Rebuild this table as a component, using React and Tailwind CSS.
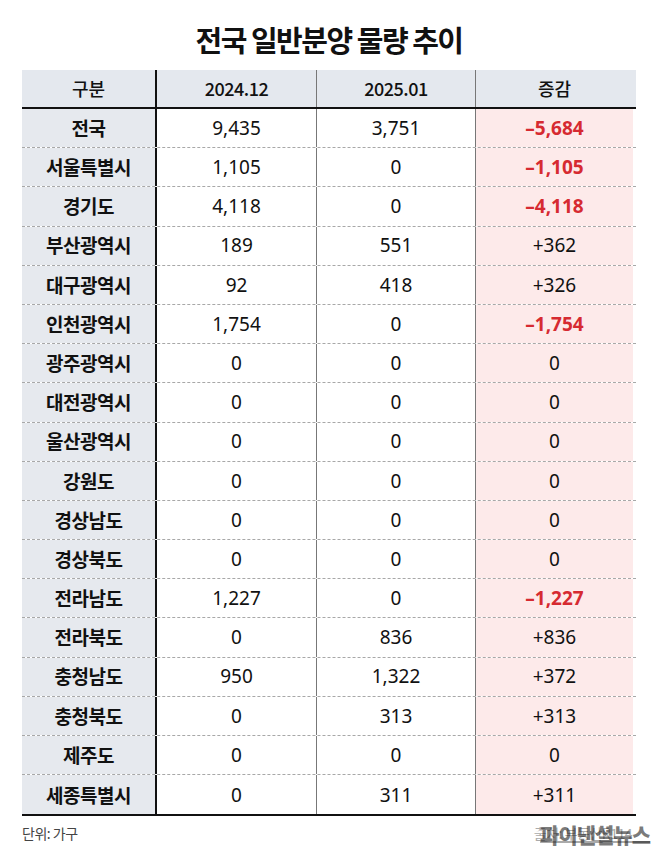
import React from "react";

const rows = [
  ["전국", "9,435", "3,751", "–5,684", true],
  ["서울특별시", "1,105", "0", "–1,105", true],
  ["경기도", "4,118", "0", "–4,118", true],
  ["부산광역시", "189", "551", "+362", false],
  ["대구광역시", "92", "418", "+326", false],
  ["인천광역시", "1,754", "0", "–1,754", true],
  ["광주광역시", "0", "0", "0", false],
  ["대전광역시", "0", "0", "0", false],
  ["울산광역시", "0", "0", "0", false],
  ["강원도", "0", "0", "0", false],
  ["경상남도", "0", "0", "0", false],
  ["경상북도", "0", "0", "0", false],
  ["전라남도", "1,227", "0", "–1,227", true],
  ["전라북도", "0", "836", "+836", false],
  ["충청남도", "950", "1,322", "+372", false],
  ["충청북도", "0", "313", "+313", false],
  ["제주도", "0", "0", "0", false],
  ["세종특별시", "0", "311", "+311", false],
];

const cols = "grid grid-cols-[135px_160px_159px_157px]";

export default function App() {
  return (
    <div className="w-[658px] h-[852px] bg-white font-['Noto_Sans_CJK_KR',sans-serif] text-[#111]">
      <div className="h-[70px] flex items-center justify-center pt-[8px]">
        <h1 className="text-[29px] font-bold tracking-[-1.5px] leading-none">
          전국 일반분양 물량 추이
        </h1>
      </div>

      <div className="px-[22px]">
        {/* header */}
        <div className={`${cols} h-[39px] bg-[#e4e8ee] border-b-2 border-[#111] text-[18px] font-medium`}>
          <div className="flex items-center justify-center border-r-2 border-[#111]">구분</div>
          <div className="flex items-center justify-center border-r border-[#777] tracking-[-0.5px]">2024.12</div>
          <div className="flex items-center justify-center border-r border-[#777] tracking-[-0.5px]">2025.01</div>
          <div className="flex items-center justify-center">증감</div>
        </div>

        {/* body */}
        <div className="border-b-2 border-[#111]">
          {rows.map(([name, a, b, diff, neg], i) => (
            <div
              key={name}
              className={`${cols} h-[39.2px] text-[19px] ${
                i < rows.length - 1 ? "border-b border-dashed border-[#a8a8a8]" : ""
              }`}
            >
              <div className="flex items-center justify-center bg-[#e6e9ee] border-r-2 border-[#111] font-bold tracking-[-0.5px]">
                {name}
              </div>
              <div className="flex items-center justify-center border-r border-[#777] font-['Noto_Sans',sans-serif]">
                {a}
              </div>
              <div className="flex items-center justify-center border-r border-[#777] font-['Noto_Sans',sans-serif]">
                {b}
              </div>
              <div
                className={`flex items-center justify-center bg-[#fdeaea] font-['Noto_Sans',sans-serif] ${
                  neg ? "font-bold text-[#d62a31]" : ""
                }`}
              >
                {diff}
              </div>
            </div>
          ))}
        </div>

        {/* footer */}
        <div className="relative flex items-center justify-between h-[34px] text-[14px] text-[#444]">
          <span className="tracking-[-0.5px]">단위: 가구</span>
          <span className="text-[#aaa] tracking-[-0.5px] mr-[4px]">출처: 부동산R114</span>
          <span className="absolute right-[-14px] top-[3px] text-[21px] font-black text-[#222]/60 tracking-[-1px] underline decoration-[#555]/50 decoration-2 underline-offset-[-2px]">
            파이낸셜뉴스
          </span>
        </div>
      </div>
    </div>
  );
}
